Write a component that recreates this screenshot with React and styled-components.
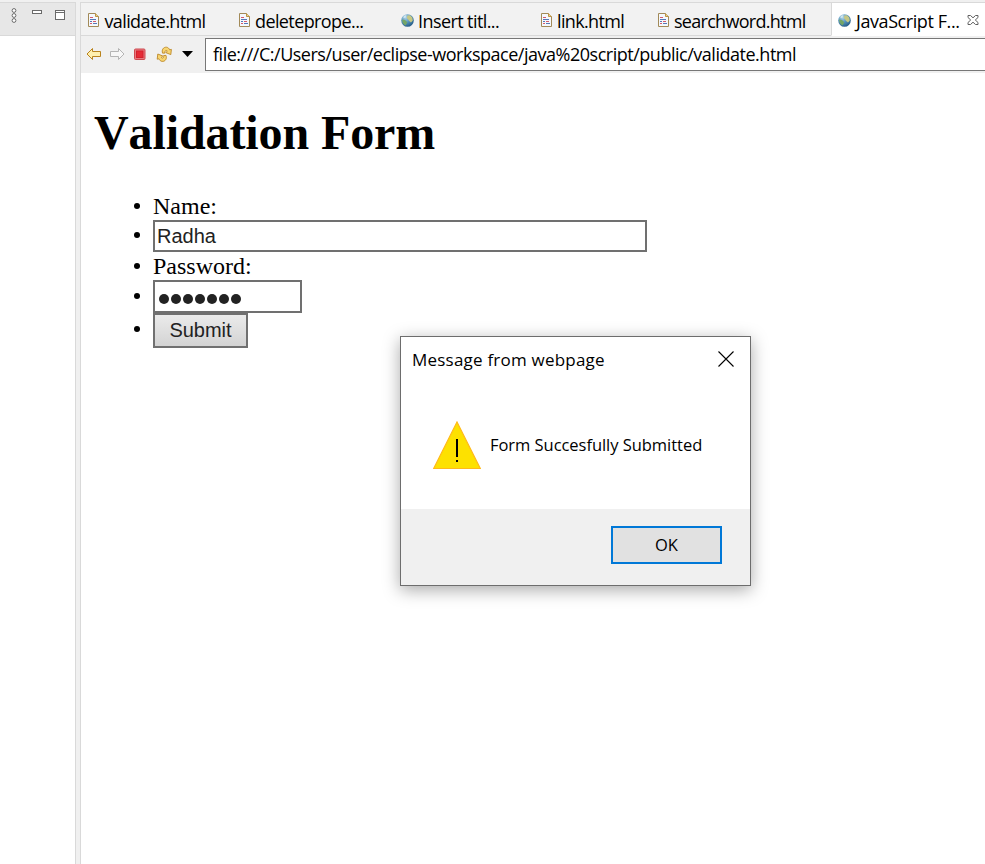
import React from 'react';
import styled, { createGlobalStyle } from 'styled-components';

const Global = createGlobalStyle`
  *, *::before, *::after { box-sizing: border-box; }
  body { margin: 0; background: #fff; overflow: hidden; }
  svg { display: block; flex: none; }
`;

const Window = styled.div`
  display: flex;
  width: 985px;
  height: 864px;
  background: #f0f0f0;
  color: #000;
  font-family: "Open Sans", "Noto Sans", sans-serif;
`;

const SidePanel = styled.aside`
  width: 76px;
  flex: none;
  margin-top: 2px;
  border: solid #d9d9d9;
  border-width: 1px 1px 0 0;
  background: #fff;
`;

const SideHeader = styled.div`
  display: flex;
  height: 33px;
  padding: 5px 0 0 11px;
  background: #e7e7e7;
  border-bottom: 1px solid #d9d9d9;
`;

const MinimizeButton = styled.span`
  width: 10px;
  height: 4px;
  margin: 2px 0 0 15px;
  border: 1px solid #6a6a6a;
  background: #fff;
`;

const MaximizeButton = styled.span`
  width: 10px;
  height: 10px;
  margin: 2px 0 0 13px;
  border: 1px solid #6a6a6a;
  background: linear-gradient(#fff 1px, #6a6a6a 1px 2px, #fff 2px);
`;

const Editor = styled.main`
  display: flex;
  flex-direction: column;
  width: 905px;
  margin: 2px 0 0 4px;
  border: solid #d9d9d9;
  border-width: 1px 0 0 1px;
`;

const TabStrip = styled.nav`
  display: flex;
  height: 33px;
`;

const TabItem = styled.div`
  display: flex;
  flex: none;
  width: ${(p) => p.$width}px;
  padding: 10px 0 0 ${(p) => (p.$active ? 6 : 7)}px;
  background: ${(p) => (p.$active ? '#fff' : '#f2f2f2')};
  border-left: ${(p) => (p.$active ? '1px solid #d9d9d9' : 'none')};
  border-bottom: 1px solid ${(p) => (p.$active ? '#fff' : '#d9d9d9')};
`;

const TabLabel = styled.span`
  margin: -4px 0 0 ${(p) => p.$gap}px;
  font-size: 18px;
  line-height: 24px;
  letter-spacing: ${(p) => p.$tracking}px;
  white-space: nowrap;
`;

const TabClose = styled.span`
  margin: 1px 0 0 7px;
`;

const Toolbar = styled.div`
  display: flex;
  flex: none;
  height: 37px;
  padding-top: 2px;
  background: #f0f0f0;
`;

const ToolIcons = styled.div`
  display: flex;
  align-items: center;
  width: 124px;
  height: 32px;
  padding-left: 5px;
`;

const AddressBar = styled.div`
  flex: 1;
  height: 33px;
  padding-left: 7px;
  border: solid #777;
  border-width: 1px 0 1px 1px;
  background: #fff;
  font-size: 18px;
  line-height: 31px;
  letter-spacing: -0.483px;
  white-space: nowrap;
`;

const Page = styled.section`
  flex: 1;
  padding: 32px 0 0 13px;
  background: #fff;
  font-family: "Liberation Serif", serif;
`;

const Heading = styled.h1`
  margin: 0;
  font-size: 48px;
  line-height: 56px;
  letter-spacing: -0.1px;
  font-kerning: none;
`;

const FormList = styled.ul`
  display: grid;
  grid-template-rows: 27px 32px 28px 33px 35px;
  margin: 32px 0 0;
  padding: 0;
  list-style: none;
`;

const FormRow = styled.li`
  display: flex;
  font-size: 24px;
  line-height: ${(p) => p.$line || 27}px;

  &::before {
    content: "";
    width: 6px;
    height: 6px;
    margin: ${(p) => p.$bullet}px 13px 0 40px;
    border-radius: 50%;
    background: #000;
  }
`;

const Field = styled.div`
  display: flex;
  align-items: center;
  width: ${(p) => p.$width}px;
  padding-left: 2px;
  border: 2px solid #707070;
  background: #fff;
  color: #222;
  font: 20px "Liberation Sans", sans-serif;
`;

const PasswordDots = styled.div`
  display: flex;
  gap: 2px;
  margin: 4px 0 0 2px;
`;

const Dot = styled.span`
  width: 10px;
  height: 10px;
  border-radius: 50%;
  background: #222;
`;

const SubmitButton = styled.button`
  width: 95px;
  padding: 0;
  border: 2px solid #707070;
  border-radius: 0;
  background: linear-gradient(#ebebeb, #d3d3d3);
  color: #222;
  font: 20px "Liberation Sans", sans-serif;
`;

const Dialog = styled.div`
  position: absolute;
  left: 400px;
  top: 336px;
  display: flex;
  flex-direction: column;
  width: 351px;
  height: 250px;
  border: 1px solid #6d6d6d;
  background: #fff;
  color: #000;
  font-family: "Open Sans", "Noto Sans", sans-serif;
  box-shadow: 0 4px 16px rgba(0, 0, 0, 0.34);
`;

const DialogTitle = styled.header`
  display: flex;
  justify-content: space-between;
  padding: 11px 16px 0 11px;
  font-size: 17px;
  line-height: 24px;
  letter-spacing: 0.215px;
`;

const CloseIcon = styled.svg`
  margin-top: 3px;
`;

const DialogMessage = styled.div`
  display: flex;
  flex: 1;
  padding: 49px 0 0 32px;
`;

const MessageText = styled.p`
  margin: 12px 0 0 9px;
  font-size: 16.5px;
  line-height: 24px;
  letter-spacing: -0.04px;
  white-space: nowrap;
`;

const DialogFooter = styled.footer`
  display: flex;
  justify-content: flex-end;
  height: 76px;
  padding: 17px 28px 0 0;
  background: #f0f0f0;
`;

const OkButton = styled.button`
  width: 111px;
  height: 38px;
  padding: 0 0 2px;
  border: 2px solid #0078d7;
  border-radius: 0;
  background: #e1e1e1;
  color: #000;
  font: 16.5px "Open Sans", sans-serif;
`;

const DocIcon = () => (
  <svg width="11" height="14" viewBox="0 0 11 14">
    <path d="M.5.5H7.5L10.5 3.5V13.5H.5Z" fill="#f5f8fd" stroke="#a28a58" />
    <path d="M7.5.5V3.5H10.5" fill="#f0d18c" stroke="#bd9344" />
    <path d="M2 4.5H5M5 8.5H8M2 10.5H4" stroke="#d5596d" />
    <path d="M2 6.5H8M2 8.5H4M5 10.5H9" stroke="#5579b7" />
  </svg>
);

const GlobeIcon = () => (
  <svg width="13" height="15" viewBox="0 -1 13 15">
    <defs>
      <radialGradient id="sea" cx=".35" cy=".25" r=".8">
        <stop offset="0" stopColor="#b5d7e9" />
        <stop offset=".5" stopColor="#5594bd" />
        <stop offset="1" stopColor="#235884" />
      </radialGradient>
    </defs>
    <circle cx="6.5" cy="6.5" r="6.3" fill="url(#sea)" />
    <path d="M6.5 1.5L9 1.2 11.3 3.5 11.8 6.5 10 8.5 8.2 7 7.2 5.5 5.8 4Z" fill="#c5c784" />
    <path d="M1 5.5L4 6 6.3 8.2 5.3 10.3 4.2 11.6 1.8 9Z" fill="#74a566" />
    <path d="M2 3.2L4 1.3 5.5 1.4 4 4Z" fill="#d3e8ef" />
  </svg>
);

const MenuDotsIcon = () => (
  <svg width="6" height="15" viewBox="0 0 6 15" fill="#fff" stroke="#6a6a6a">
    <circle cx="3" cy="2.5" r="1.9" />
    <circle cx="3" cy="7.5" r="1.9" />
    <circle cx="3" cy="12.5" r="1.9" />
  </svg>
);

const CloseTabIcon = () => (
  <svg width="12" height="12" viewBox="0 0 12 12" fill="#fff" stroke="#606060">
    <path d="M1 1.5H3.5L6 3.8 8.5 1.5H11V3.5L8.3 6 11 8.5V10.5H8.5L6 8.2 3.5 10.5H1V8.5L3.7 6 1 3.5Z" />
  </svg>
);

const ToolbarIcons = () => (
  <svg width="110" height="18" viewBox="0 0 110 18">
    <path d="M1 9L6.5 3.5V6.5H14.5V11.5H6.5V14.5Z" fill="#fff0ae" stroke="#b9831d" strokeLinejoin="round" />
    <path d="M38 9L32.5 3.5V6.5H24.5V11.5H32.5V14.5Z" fill="#f7f7f7" stroke="#b5b5b5" strokeLinejoin="round" />
    <rect x="48.5" y="4" width="10.5" height="10.5" rx="1" fill="#e77b80" stroke="#cf4a50" />
    <rect x="50.5" y="6" width="6.5" height="6.5" fill="#e52b36" stroke="#d3202c" />
    <g fill="#f7d571" stroke="#bc8828" strokeWidth=".9" strokeLinejoin="round">
      <path d="M76.6 8.2C75.4 5 77.3 2 80.4 2.2 82 2.3 83 3.4 83.7 4.8L85.4 4.4 84.8 9.6 79.8 7.6 81.3 6.2C80.2 4.6 78.5 5.8 79 8Z" />
      <path d="M80 10.4C81.2 13.6 79.3 16.6 76.2 16.4 74.6 16.3 73.6 15.2 72.9 13.8L71.2 14.2 71.8 9 76.8 11 75.3 12.4C76.4 14 78.1 12.8 77.6 10.6Z" />
    </g>
    <path d="M96 6H107L101.5 12Z" fill="#000" />
  </svg>
);

const WarningIcon = () => (
  <svg width="48" height="49" viewBox="0 0 48 49">
    <path d="M24 1L47.3 47.5H.7Z" fill="#fde100" stroke="#ffb91a" strokeWidth="1.2" />
    <path d="M23 18H25V36H23ZM23 39H25V41H23Z" fill="#000" />
  </svg>
);

const tabs = [
  { label: 'validate.html', width: 151, tracking: -0.62, icon: 'doc', gap: 5.5 },
  { label: 'deleteprope...', width: 162, tracking: -0.6, icon: 'doc', gap: 5 },
  { label: 'Insert titl...', width: 140, tracking: -0.583, icon: 'globe', gap: 4 },
  { label: 'link.html', width: 117, tracking: -0.65, icon: 'doc', gap: 5 },
  { label: 'searchword.html', width: 180, tracking: -0.71, icon: 'doc', gap: 5 },
  { label: 'JavaScript F...', width: 154, tracking: -0.42, icon: 'globe', gap: 5, active: true },
];

function Tab({ label, width, tracking, icon, gap, active }) {
  return (
    <TabItem $width={width} $active={active}>
      {icon === 'doc' ? <DocIcon /> : <GlobeIcon />}
      <TabLabel $gap={gap} $tracking={tracking}>{label}</TabLabel>
      {active && <TabClose><CloseTabIcon /></TabClose>}
    </TabItem>
  );
}

export default function App() {
  return (
    <>
      <Global />
      <Window>
        <SidePanel>
          <SideHeader>
            <MenuDotsIcon />
            <MinimizeButton />
            <MaximizeButton />
          </SideHeader>
        </SidePanel>
        <Editor>
          <TabStrip>
            {tabs.map((tab) => <Tab key={tab.label} {...tab} />)}
          </TabStrip>
          <Toolbar>
            <ToolIcons><ToolbarIcons /></ToolIcons>
            <AddressBar>file:///C:/Users/user/eclipse-workspace/java%20script/public/validate.html</AddressBar>
          </Toolbar>
          <Page>
            <Heading>Validation Form</Heading>
            <FormList>
              <FormRow $bullet={10}>Name:</FormRow>
              <FormRow $bullet={12}><Field $width={494}>Radha</Field></FormRow>
              <FormRow $bullet={11} $line={29}>Password:</FormRow>
              <FormRow $bullet={13}>
                <Field $width={149}>
                  <PasswordDots>
                    {Array.from({ length: 7 }, (_, i) => <Dot key={i} />)}
                  </PasswordDots>
                </Field>
              </FormRow>
              <FormRow $bullet={13}><SubmitButton>Submit</SubmitButton></FormRow>
            </FormList>
          </Page>
        </Editor>
      </Window>
      <Dialog role="dialog">
        <DialogTitle>
          Message from webpage
          <CloseIcon width="16" height="16" viewBox="0 0 16 16" stroke="#000" strokeWidth="1.1">
            <path d="M.5.5L15.5 15.5M15.5.5L.5 15.5" />
          </CloseIcon>
        </DialogTitle>
        <DialogMessage>
          <WarningIcon />
          <MessageText>Form Succesfully Submitted</MessageText>
        </DialogMessage>
        <DialogFooter><OkButton>OK</OkButton></DialogFooter>
      </Dialog>
    </>
  );
}
